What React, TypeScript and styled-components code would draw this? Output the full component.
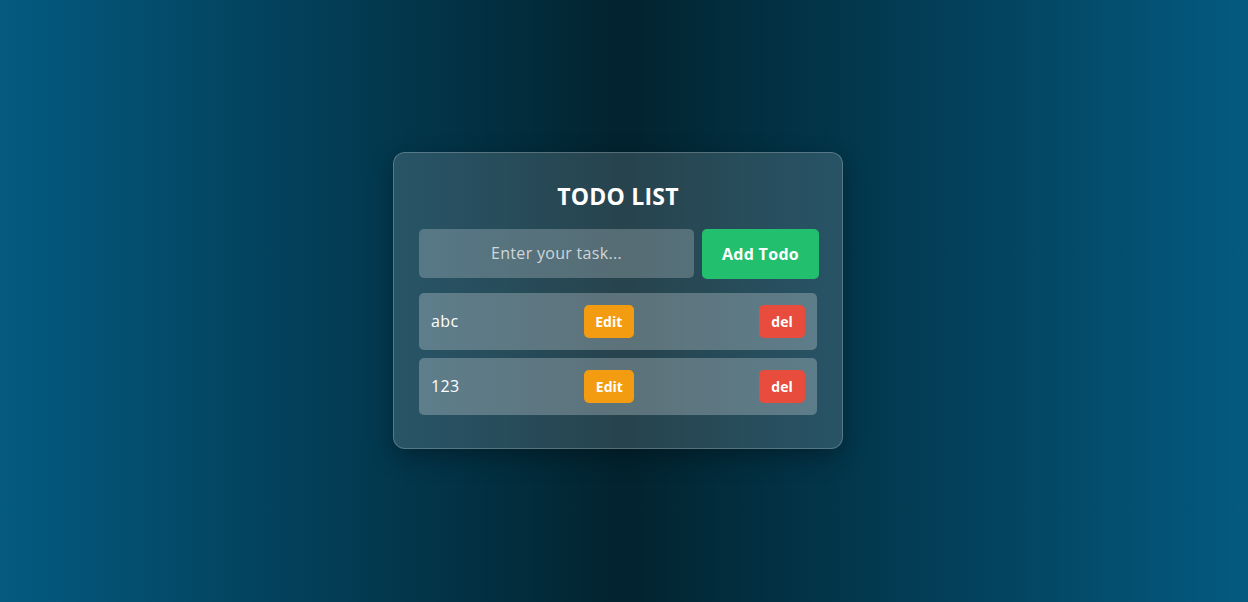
import React from "react";
import styled, { createGlobalStyle } from "styled-components";

const GlobalStyle = createGlobalStyle`
  html, body { margin: 0; padding: 0; }
  body {
    font-family: "Open Sans", "Noto Sans", sans-serif;
    background: linear-gradient(to right, #045a80 0%, #02232f 50%, #045a80 100%);
    min-height: 602px;
  }
  * { box-sizing: border-box; }
`;

const Page = styled.div`
  height: 602px;
  display: flex;
  align-items: center;
  justify-content: center;
  padding: 0 12px 2px 0;
`;

const Card = styled.div`
  width: 450px;
  padding: 25px;
  border: 1px solid rgba(255, 255, 255, 0.22);
  border-radius: 12px;
  background: rgba(255, 255, 255, 0.15);
  box-shadow: 0 8px 24px rgba(0, 0, 0, 0.3);
  color: #fff;
`;

const Title = styled.h1`
  margin: 0 0 15px;
  font-size: 23px;
  line-height: 36px;
  font-weight: 700;
  letter-spacing: 0.2px;
  text-align: center;
  color: #fff;
`;

const Form = styled.div`
  display: flex;
  gap: 8px;
  height: 50px;
  margin-bottom: 14px;
`;

const Input = styled.input`
  flex: none;
  width: 275px;
  height: 49px;
  border: none;
  outline: none;
  border-radius: 5px;
  background: rgba(255, 255, 255, 0.22);
  color: #fff;
  font-family: inherit;
  font-size: 16px;
  letter-spacing: 0.3px;
  text-align: center;
  &::placeholder { color: rgba(255, 255, 255, 0.72); }
`;

const AddButton = styled.button`
  flex: none;
  width: 117px;
  height: 50px;
  border: none;
  border-radius: 5px;
  background: #22c06e;
  color: #fff;
  font-family: inherit;
  font-size: 16px;
  font-weight: 700;
  letter-spacing: 0.3px;
  cursor: pointer;
`;

const List = styled.ul`
  list-style: none;
  margin: 0;
  padding: 0;
`;

const Row = styled.li`
  display: flex;
  align-items: center;
  justify-content: space-between;
  padding: 12px;
  margin-bottom: 8px;
  border-radius: 5px;
  background: rgba(255, 255, 255, 0.25);
  font-size: 16px;
  color: #fff;
`;

const Label = styled.span`
  line-height: 20px;
  letter-spacing: 0.4px;
`;

const SmallButton = styled.button<{ $bg: string; $w: number }>`
  width: ${(p) => p.$w}px;
  height: 33px;
  border: none;
  border-radius: 5px;
  background: ${(p) => p.$bg};
  color: #fff;
  font-family: inherit;
  font-size: 14px;
  font-weight: 700;
  cursor: pointer;
`;

const todos = ["abc", "123"];

export default function App() {
  return (
    <>
      <GlobalStyle />
      <Page>
        <Card>
          <Title>TODO LIST</Title>
          <Form>
            <Input placeholder="Enter your task..." />
            <AddButton>Add Todo</AddButton>
          </Form>
          <List>
            {todos.map((t) => (
              <Row key={t}>
                <Label>{t}</Label>
                <SmallButton $bg="#f39c12" $w={50}>Edit</SmallButton>
                <SmallButton $bg="#e74c3c" $w={46}>del</SmallButton>
              </Row>
            ))}
          </List>
        </Card>
      </Page>
    </>
  );
}
